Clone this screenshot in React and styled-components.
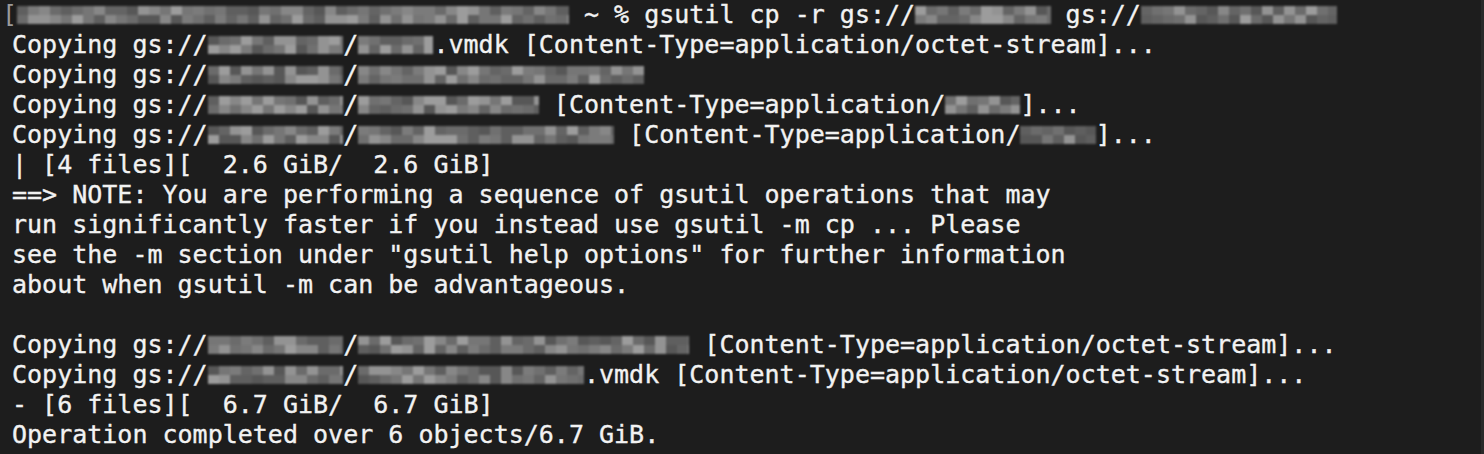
import React from 'react';
import styled, { createGlobalStyle } from 'styled-components';

const GlobalStyle = createGlobalStyle`
  html, body {
    margin: 0;
    padding: 0;
    background: #1d1d1d;
  }
`;

const Terminal = styled.div`
  width: 1484px;
  height: 454px;
  box-sizing: border-box;
  padding: 0 0 0 12px;
  background: #1d1d1d;
  border-right: 3px solid #292929;
  font-family: "DejaVu Sans Mono", "Liberation Mono", monospace;
  font-size: 25px;
  line-height: 30px;
  color: #f2f2f2;
  -webkit-text-stroke: 0.35px #f2f2f2;
  white-space: pre;
  overflow: hidden;
`;

const Line = styled.div`
  height: 30px;
`;

const Bracket = styled.span`
  margin-left: -10px;
  color: #9a9a9a;
  -webkit-text-stroke: 0;
`;

// grey tiles that stand in for the redacted (pixelated) parts
const GREYS = ['#575757', '#646464', '#707070', '#7b7b7b', '#878787', '#6b6b6b', '#5f5f5f', '#939393', '#767676', '#9c9c9c'];
const TILE = 11;

function tileRow(count, seed) {
  let s = seed * 7919 + 104729;
  const stops = [];
  for (let i = 0; i < count; i++) {
    s = (s * 9301 + 49297) % 233280;
    const c = GREYS[Math.floor(s / 7) % GREYS.length];
    stops.push(`${c} ${i * TILE}px ${(i + 1) * TILE}px`);
  }
  return `linear-gradient(to right, ${stops.join(', ')})`;
}

function pixelate(n, seed, extra) {
  const count = Math.ceil((n * 15.05 + (extra || 0)) / TILE) + 1;
  return `${tileRow(count, seed)} top left / 100% 50% no-repeat, ${tileRow(count, seed + 17)} bottom left / 100% 50% no-repeat`;
}

const Blur = styled.span`
  display: inline-block;
  width: calc(${p => p.$n}ch + ${p => p.$extra || 0}px);
  height: 18px;
  vertical-align: -1px;
  background: ${p => pixelate(p.$n, p.$seed, p.$extra)};
  filter: blur(0.9px);
`;

export default function App() {
  return (
    <>
      <GlobalStyle />
      <Terminal>
        <Line>
          <Bracket>[</Bracket><Blur $n={36} $extra={10} $seed={1} />{' ~ % gsutil cp -r gs://'}<Blur $n={9} $seed={2} />{' gs://'}<Blur $n={13} $seed={3} />
        </Line>
        <Line>
          {'Copying gs://'}<Blur $n={9} $seed={4} />/<Blur $n={5} $seed={5} />{'.vmdk [Content-Type=application/octet-stream]...'}
        </Line>
        <Line>
          {'Copying gs://'}<Blur $n={9} $seed={6} />/<Blur $n={19} $seed={7} />
        </Line>
        <Line>
          {'Copying gs://'}<Blur $n={9} $seed={8} />/<Blur $n={12} $seed={9} />{' [Content-Type=application/'}<Blur $n={5} $seed={10} />{']...'}
        </Line>
        <Line>
          {'Copying gs://'}<Blur $n={9} $seed={11} />/<Blur $n={17} $seed={12} />{' [Content-Type=application/'}<Blur $n={5} $seed={13} />{']...'}
        </Line>
        <Line>{'| [4 files][  2.6 GiB/  2.6 GiB]'}</Line>
        <Line>{'==> NOTE: You are performing a sequence of gsutil operations that may'}</Line>
        <Line>{'run significantly faster if you instead use gsutil -m cp ... Please'}</Line>
        <Line>{'see the -m section under "gsutil help options" for further information'}</Line>
        <Line>{'about when gsutil -m can be advantageous.'}</Line>
        <Line />
        <Line>
          {'Copying gs://'}<Blur $n={9} $seed={14} />/<Blur $n={22} $seed={15} />{' [Content-Type=application/octet-stream]...'}
        </Line>
        <Line>
          {'Copying gs://'}<Blur $n={9} $seed={16} />/<Blur $n={15} $seed={18} />{'.vmdk [Content-Type=application/octet-stream]...'}
        </Line>
        <Line>{'- [6 files][  6.7 GiB/  6.7 GiB]'}</Line>
        <Line>{'Operation completed over 6 objects/6.7 GiB.'}</Line>
      </Terminal>
    </>
  );
}
